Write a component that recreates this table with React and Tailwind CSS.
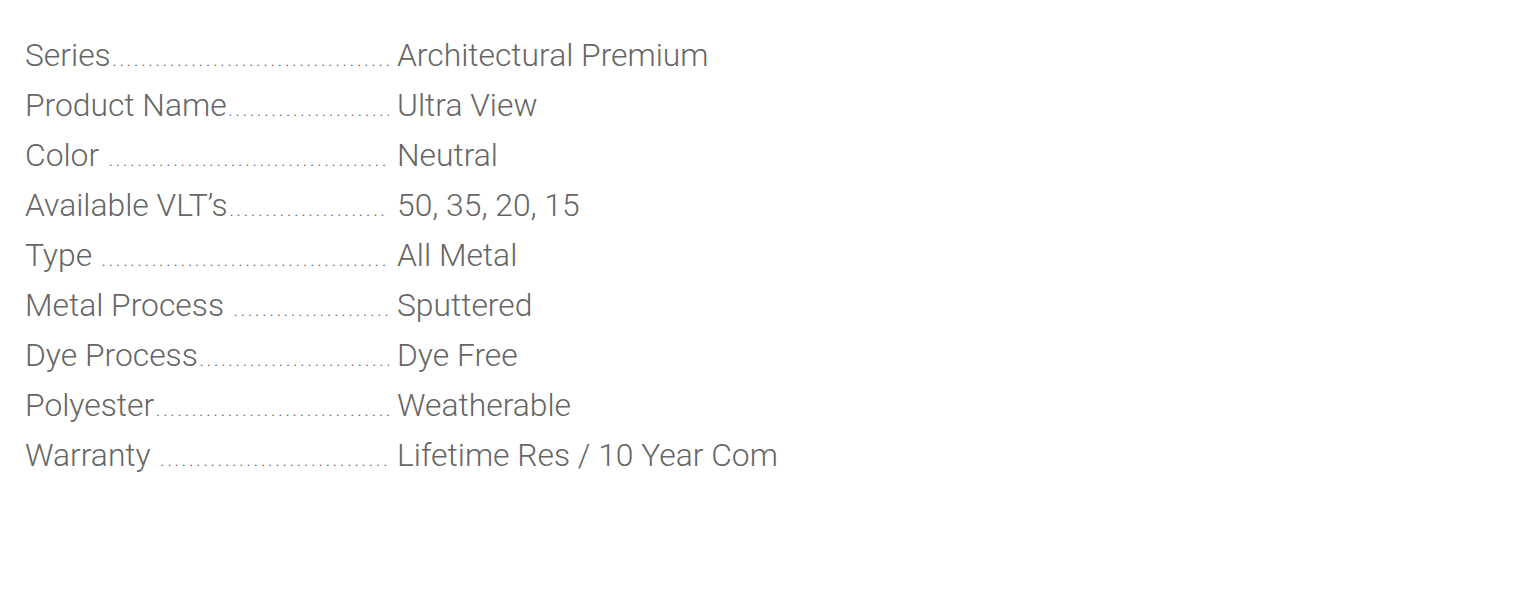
const rows = [
  ['Series', 'Architectural Premium'],
  ['Product Name', 'Ultra View'],
  ['Color ', 'Neutral'],
  ['Available VLT\u2019s', '50, 35, 20, 15'],
  ['Type ', 'All Metal'],
  ['Metal Process ', 'Sputtered'],
  ['Dye Process', 'Dye Free'],
  ['Polyester', 'Weatherable'],
  ['Warranty ', 'Lifetime Res / 10 Year Com'],
];

const dots = '.'.repeat(90);

export default function App() {
  return (
    <div className="min-h-[600px] bg-white pl-[25px] pt-[30px] font-['Roboto',sans-serif] font-light text-[31.8px] leading-[50px] text-[#666]">
      {rows.map(([label, value]) => (
        <div key={label} className="flex h-[50px] items-baseline whitespace-nowrap">
          <div className="flex w-[364px] items-baseline">
            <span className="whitespace-pre">{label}</span>
            <span className="ml-[2px] flex-1 overflow-hidden text-[14px] leading-none tracking-[3.5px] font-normal">{dots}</span>
          </div>
          <span className="pl-[8px]">{value}</span>
        </div>
      ))}
    </div>
  );
}
